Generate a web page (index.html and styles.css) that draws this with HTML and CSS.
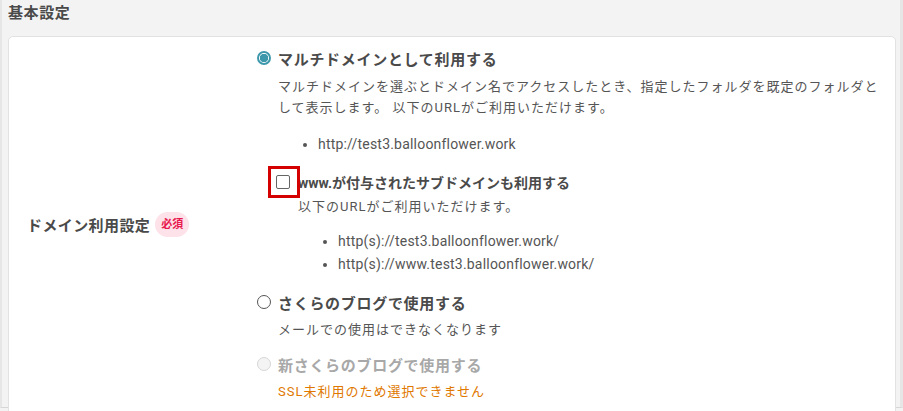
FILE: index.html
```html
<!DOCTYPE html>
<html lang="ja">
<head>
    <meta charset="UTF-8">
    <meta name="viewport" content="width=device-width, initial-scale=1.0">
    <title>基本設定</title>
    <link rel="stylesheet" href="styles.css">
</head>
<body>
<div class="page">
    <h2 class="section-title">基本設定</h2>

    <div class="card">
        <div class="label-cell">
            <span class="label">ドメイン利用設定</span>
            <span class="badge">必須</span>
        </div>

        <div class="field-cell">
            <div class="option">
                <span class="radio checked"></span>
                <span class="option-label">マルチドメインとして利用する</span>
            </div>
            <p class="desc">マルチドメインを選ぶとドメイン名でアクセスしたとき、指定したフォルダを既定のフォルダと<br>して表示します。 以下のURLがご利用いただけます。</p>
            <ul class="url-list">
                <li>http://test3.balloonflower.work</li>
            </ul>

            <div class="sub">
                <div class="check-row">
                    <span class="checkbox"></span>
                    <span class="option-label">www.が付与されたサブドメインも利用する</span>
                    <span class="highlight"></span>
                </div>
                <p class="desc sub-desc">以下のURLがご利用いただけます。</p>
                <ul class="url-list sub-list">
                    <li>http(s)://test3.balloonflower.work/</li>
                    <li>http(s)://www.test3.balloonflower.work/</li>
                </ul>
            </div>

            <div class="option option-2">
                <span class="radio"></span>
                <span class="option-label">さくらのブログで使用する</span>
            </div>
            <p class="desc short">メールでの使用はできなくなります</p>

            <div class="option option-3 disabled">
                <span class="radio"></span>
                <span class="option-label">新さくらのブログで使用する</span>
            </div>
            <p class="desc short warn">SSL未利用のため選択できません</p>
        </div>
    </div>
</div>
</body>
</html>
```

FILE: styles.css
```css
html,
body {
  margin: 0;
  height: 100%;
}

body {
  font-family: Roboto, "Noto Sans CJK JP", sans-serif;
  color: #555;
  background-color: #f3f3f3;
  overflow: hidden;
}

.page {
  height: 408px;
  border-left: 2px solid #e6e6e6;
  border-right: 3px solid #e6e6e6;
  border-bottom: 1px solid #d6d6d6;
  box-sizing: border-box;
}

.section-title {
  margin: 0;
  padding: 3px 0 0 6px;
  height: 33px;
  font-size: 15px;
  font-weight: bold;
  line-height: 21px;
  color: #4a4a4a;
  letter-spacing: 0.6px;
}

.card {
  display: grid;
  grid-template-columns: 248px 1fr;
  margin: 0 4px 0 6px;
  background-color: #fff;
  border: 1px solid #e2e2e2;
  border-radius: 5px;
  height: 380px;
}

.label-cell {
  display: flex;
  align-items: center;
  padding-left: 18px;
  padding-bottom: 5px;
}

.label {
  font-size: 15px;
  font-weight: bold;
  color: #4a4a4a;
  letter-spacing: 0.4px;
}

.badge {
  margin-left: 5px;
  padding: 0 6px;
  height: 25px;
  line-height: 25px;
  border-radius: 13px;
  background-color: #fde2e9;
  color: #e8184f;
  font-size: 11px;
  font-weight: bold;
}

.field-cell {
  padding-top: 10px;
  letter-spacing: 1px;
}

.option {
  display: flex;
  align-items: center;
  height: 22px;
}

.option-label {
  font-size: 15px;
  font-weight: bold;
  color: #4a4a4a;
  letter-spacing: 0.7px;
}

.radio {
  width: 14px;
  height: 14px;
  margin-right: 7px;
  box-sizing: border-box;
  border: 1.5px solid #555;
  border-radius: 50%;
  flex-shrink: 0;
}

.radio.checked {
  border: 2px solid #3d98ab;
  background: radial-gradient(circle, #3d98ab 0 4px, #fff 4.5px);
}

.desc {
  margin: 7px 0 0 21px;
  font-size: 13px;
  line-height: 21px;
  color: #555;
}

.url-list {
  margin: 15px 0 0 21px;
  padding-left: 40px;
  font-size: 14px;
  line-height: 23px;
  color: #555;
  letter-spacing: 0.2px;
}

.sub {
  margin-left: 19px;
}

.check-row {
  position: relative;
  display: flex;
  align-items: center;
  height: 22px;
  margin-top: 15px;
}

.checkbox {
  width: 14px;
  height: 14px;
  margin-right: 8px;
  box-sizing: border-box;
  border: 1px solid #666;
  border-radius: 2px;
  background-color: #fff;
}

.check-row .option-label {
  font-size: 14px;
  letter-spacing: 0;
}

.highlight {
  position: absolute;
  left: -8px;
  top: -5px;
  width: 32px;
  height: 32px;
  box-sizing: border-box;
  border: 3px solid #d40000;
}

.sub-desc {
  margin: 3px 0 0 22px;
}

.sub-list {
  margin: 13px 0 0 22px;
}

.option-2 {
  margin-top: 15px;
}

.desc.short {
  margin-top: 6px;
}

.option-3 {
  margin-top: 13px;
}

.disabled .radio {
  border: 1px solid #d6d6d6;
  background-color: #f4f4f4;
}

.disabled .option-label {
  color: #a8a8a8;
}

.warn {
  margin-top: 6px;
  color: #e07800;
  letter-spacing: 1px;
}
```
